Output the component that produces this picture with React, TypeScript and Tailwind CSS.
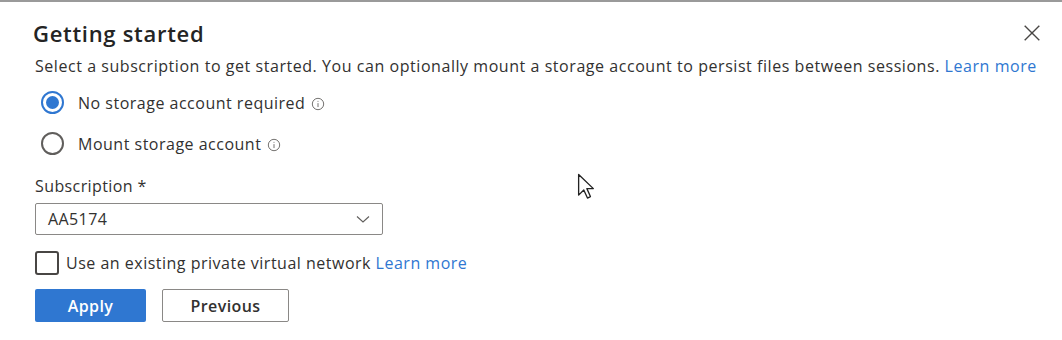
import React from "react";

const InfoIcon = () => (
  <svg viewBox="0 0 16 16" className="w-[14px] h-[14px] text-[#605e5c]" fill="none" stroke="currentColor" strokeWidth="1">
    <circle cx="8" cy="8" r="6.5" />
    <line x1="8" y1="7" x2="8" y2="11.5" />
    <circle cx="8" cy="4.8" r="0.6" fill="currentColor" stroke="none" />
  </svg>
);

const Radio = ({ checked, label }: { checked?: boolean; label: string }) => (
  <label className="flex items-center h-[41px]">
    <span
      className={`flex items-center justify-center w-[23px] h-[23px] rounded-full border-2 ${
        checked ? "border-[#2f77d1]" : "border-[#605e5c]"
      }`}
    >
      {checked && <span className="w-[13px] h-[13px] rounded-full bg-[#2f77d1]" />}
    </span>
    <span className="ml-[14px] text-[16px] tracking-[0.5px] text-[#323130]">{label}</span>
    <span className="ml-[6px] mt-[2px]">
      <InfoIcon />
    </span>
  </label>
);

export default function App() {
  return (
    <div
      className="relative w-[1062px] h-[340px] bg-white border-t-2 border-[#9a9a9a] overflow-hidden"
      style={{ fontFamily: '"Open Sans", "Liberation Sans", sans-serif' }}
    >
      <div className="flex flex-col pl-[33px] pr-[18px] pt-[16px]">
        {/* Header */}
        <div className="flex items-center justify-between h-[30px]">
          <h1 className="text-[22px] tracking-[0.7px] font-semibold text-[#242424]">Getting started</h1>
          <button className="w-[24px] h-[24px] flex items-center justify-center text-[#484644]">
            <svg viewBox="0 0 16 16" className="w-[18px] h-[18px]" stroke="currentColor" strokeWidth="1.2">
              <line x1="1.5" y1="1.5" x2="14.5" y2="14.5" />
              <line x1="14.5" y1="1.5" x2="1.5" y2="14.5" />
            </svg>
          </button>
        </div>

        <p className="mt-[7px] ml-[2px] text-[16px] tracking-[0.55px] leading-[22px] text-[#323130] whitespace-nowrap">
          Select a subscription to get started. You can optionally mount a storage account to persist files between
          sessions. <a className="text-[#2f77d1]">Learn more</a>
        </p>

        {/* Storage options */}
        <div className="flex flex-col mt-[5px] ml-[8px]">
          <Radio checked label="No storage account required" />
          <Radio label="Mount storage account" />
        </div>

        {/* Subscription */}
        <label className="mt-[11px] ml-[2px] text-[16px] tracking-[0.4px] leading-[22px] text-[#323130]">Subscription *</label>
        <div className="mt-[6px] ml-[2px] w-[348px] h-[32px] flex items-center justify-between border border-[#8a8886] rounded-[2px] pl-[12px] pr-[11px]">
          <span className="text-[16px] tracking-[0.4px] text-[#323130]">AA5174</span>
          <svg viewBox="0 0 16 16" className="w-[16px] h-[16px] text-[#605e5c]" fill="none" stroke="currentColor" strokeWidth="1.1">
            <polyline points="2,5.5 8,11 14,5.5" />
          </svg>
        </div>

        {/* Virtual network */}
        <label className="mt-[16px] ml-[2px] flex items-center">
          <span className="w-[24px] h-[24px] border-2 border-[#484644] rounded-[3px]" />
          <span className="ml-[7px] text-[16px] tracking-[0.5px] text-[#323130]">
            Use an existing private virtual network <a className="text-[#2f77d1]">Learn more</a>
          </span>
        </label>

        {/* Actions */}
        <div className="flex gap-[16px] mt-[14px] ml-[2px]">
          <button className="w-[111px] h-[33px] bg-[#2f77d1] rounded-[2px] text-white text-[16px] tracking-[0.4px] font-semibold">
            Apply
          </button>
          <button className="w-[127px] h-[33px] bg-white border border-[#8a8886] rounded-[2px] text-[#323130] text-[16px] tracking-[0.4px] font-semibold">
            Previous
          </button>
        </div>
      </div>

      {/* Mouse pointer */}
      <svg viewBox="0 0 12 19" className="absolute left-[577px] top-[171px] w-[18px] h-[28px]">
        <path d="M1 1 L1 15 L4.5 11.5 L7 17 L9 16 L6.6 10.6 L11 10.6 Z" fill="white" stroke="#222" strokeWidth="0.9" strokeLinejoin="round" />
      </svg>
    </div>
  );
}
